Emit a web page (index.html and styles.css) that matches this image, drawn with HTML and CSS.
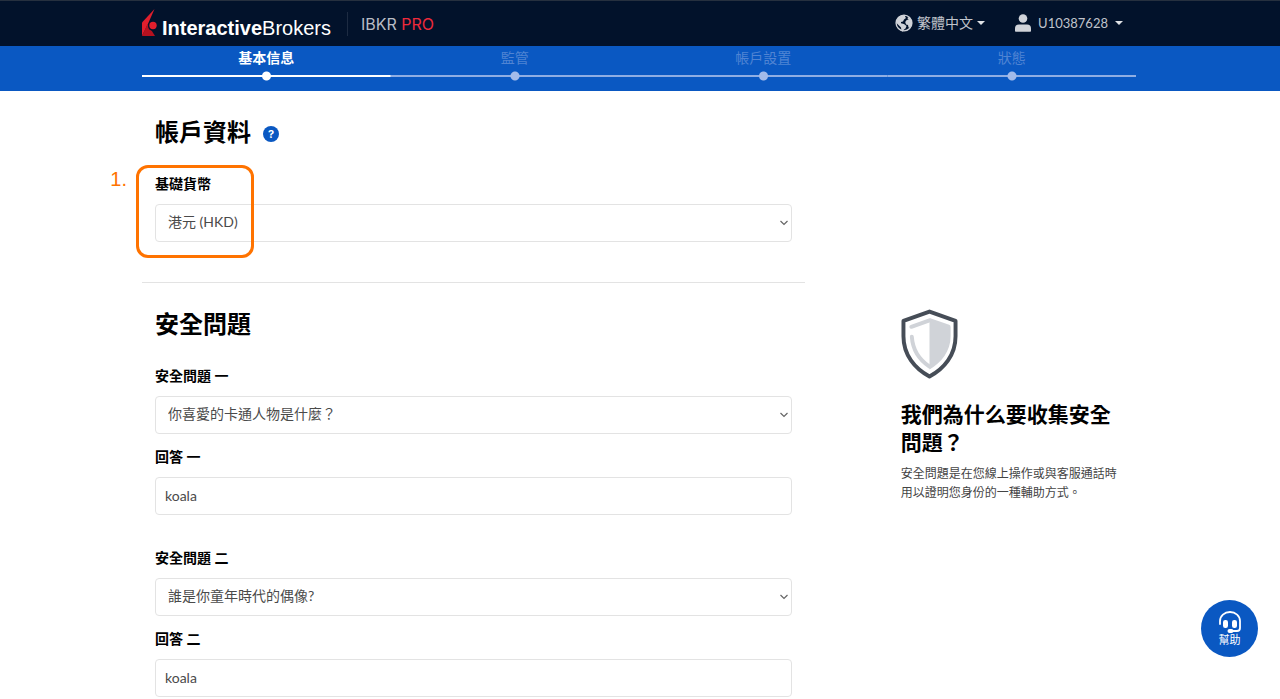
FILE: index.html
```html
<!DOCTYPE html>
<html lang="zh-Hant">
<head>
<meta charset="utf-8">
<meta name="viewport" content="width=device-width, initial-scale=1">
<title>帳戶資料 - InteractiveBrokers</title>
<link rel="stylesheet" href="styles.css">
</head>
<body>
<header class="topbar">
  <div class="container topbar-inner">
    <a class="brand" href="#">
      <svg class="brand-mark" width="16" height="28" viewBox="0 0 16 28" aria-hidden="true">
        <path d="M12.500 0 0 13.500V27l5.500-11z" fill="#e01f2d"/>
        <path d="M0 27 5.500 15 13 27z" fill="#b5111f"/>
        <circle cx="11" cy="17" r="5" fill="#02122b"/>
        <circle cx="11" cy="16.500" r="3.700" fill="#e01f2d"/>
      </svg>
      <span class="brand-name"><b>Interactive</b>Brokers</span>
    </a>
    <span class="product">IBKR <span class="product-tier">PRO</span></span>
    <nav class="menu">
      <button class="menu-button" type="button">
        <svg width="18" height="18" viewBox="0 0 18 18" aria-hidden="true">
          <circle cx="9" cy="9" r="7.900" fill="none" stroke="#d0d3d9" stroke-width="1.400"/>
          <path d="M1.500 7 3.500 3 7 1.300l4-.3-1 1.500 1 1.500-2 1.500-1 2-2 .5v1.300l3 .7 2.500 2-1 2.500-2 1.500-.5 1.700-1.500-.7-.5-3.500-2-2L1.500 9z" fill="#d0d3d9"/>
          <path d="M13 3 15.500 4.500 17 8v2.500l-2 3.500-1.500-.5-.5-2.500-2-.5-.8-2.500 1.500-2 2-.5-1.200-1z" fill="#d0d3d9"/>
        </svg>
        <span class="menu-text">繁體中文</span>
        <span class="caret"></span>
      </button>
      <button class="menu-button account" type="button">
        <svg width="16" height="18" viewBox="0 0 16 18" aria-hidden="true">
          <circle cx="8" cy="4.500" r="4.300" fill="#d0d3d9"/>
          <path d="M0 17v-2.500Q0 10.500 4 10.500h8q4 0 4 4V17q0 .8-.8.8H.8Q0 17.800 0 17z" fill="#d0d3d9"/>
        </svg>
        <span class="menu-text account-id">U10387628</span>
        <span class="caret"></span>
      </button>
    </nav>
  </div>
</header>

<div class="progress">
  <div class="container">
    <ol class="steps">
      <li class="step current" aria-current="step">基本信息</li>
      <li class="step">監管</li>
      <li class="step">帳戶設置</li>
      <li class="step">狀態</li>
    </ol>
  </div>
</div>

<main class="container page">
  <section class="panel account-panel">
    <h1 class="heading">帳戶資料
      <button class="hint" type="button" aria-label="說明">?</button>
    </h1>
    <div class="field">
      <label class="label" for="currency">基礎貨幣</label>
      <div class="select-wrap">
        <select class="control select" id="currency"><option>港元 (HKD)</option></select>
        <svg class="chevron" width="8" height="6" viewBox="0 0 8 6" aria-hidden="true"><path d="M.5 1 4 4.500 7.500 1"/></svg>
      </div>
    </div>
    <div class="callout"><span class="callout-number">1.</span></div>
  </section>

  <section class="panel">
    <h2 class="heading">安全問題</h2>
    <div class="field">
      <label class="label" for="q1">安全問題 一</label>
      <div class="select-wrap">
        <select class="control select" id="q1"><option>你喜愛的卡通人物是什麼？</option></select>
        <svg class="chevron" width="8" height="6" viewBox="0 0 8 6" aria-hidden="true"><path d="M.5 1 4 4.500 7.500 1"/></svg>
      </div>
    </div>
    <div class="field answer">
      <label class="label" for="a1">回答 一</label>
      <input class="control" id="a1" type="text" value="koala">
    </div>
    <div class="field next-question">
      <label class="label" for="q2">安全問題 二</label>
      <div class="select-wrap">
        <select class="control select" id="q2"><option>誰是你童年時代的偶像?</option></select>
        <svg class="chevron" width="8" height="6" viewBox="0 0 8 6" aria-hidden="true"><path d="M.5 1 4 4.500 7.500 1"/></svg>
      </div>
    </div>
    <div class="field answer">
      <label class="label" for="a2">回答 二</label>
      <input class="control" id="a2" type="text" value="koala">
    </div>
  </section>

  <aside class="info">
    <svg class="shield" width="57" height="70" viewBox="0 0 58 70" aria-hidden="true">
      <path d="M29 2 55.500 11.500V27C55.500 46 44 60 29 68 14 60 2.500 46 2.500 27V11.500z" fill="#fff" stroke="#464d57" stroke-width="4" stroke-linejoin="round"/>
      <path d="M29 8.500 49 15.500Q50.500 16 50.500 18v9C50.500 42 41 54 29 61z" fill="#d0d3d8"/>
      <path d="M10.500 17.500 29 11M11 27.500C12 42 20 52 29 58" fill="none" stroke="#d0d3d8" stroke-width="4" stroke-linecap="round"/>
    </svg>
    <h3 class="info-title">我們為什么要收集安全問題？</h3>
    <p class="info-text">安全問題是在您線上操作或與客服通話時用以證明您身份的一種輔助方式。</p>
  </aside>
</main>

<button class="help" type="button">
  <svg width="22" height="22" viewBox="0 0 22 22" aria-hidden="true">
    <path d="M1 13V10A10 9 0 0 1 21 10v7q0 3-3 3h-5" fill="none" stroke="#fff" stroke-width="1.800" stroke-linecap="round"/>
    <rect x="4" y="9" width="5" height="8" rx="2.200" fill="#fff"/>
    <rect x="13" y="9" width="5" height="8" rx="2.200" fill="#fff"/>
    <rect x="8.500" y="18" width="6" height="4" rx="2" fill="#fff"/>
  </svg>
  <span>幫助</span>
</button>
</body>
</html>
```
FILE: styles.css
```css
* {
  box-sizing: border-box;
}

body {
  margin: 0;
  background: #fff;
  color: #000;
  font: 14px/20px Lato, "Noto Sans CJK TC", sans-serif;
}

button,
input,
select {
  margin: 0;
  font: inherit;
}

button {
  padding: 0;
  border: 0;
  background: none;
  cursor: pointer;
}

.container {
  width: 100%;
  max-width: 996px;
  margin: 0 auto;
  padding-right: 2px;
}

.topbar {
  border-top: 1px solid #26303f;
  background: #02122b;
}

.topbar-inner {
  display: flex;
  align-items: center;
  height: 45px;
}

.brand {
  display: flex;
  align-items: center;
  gap: 4px;
  color: #fff;
  text-decoration: none;
}

.brand-mark {
  margin-bottom: 2px;
}

.brand-name {
  padding-top: 8px;
  font: 20px/24px "Liberation Sans", Arial, sans-serif;
}

.product {
  margin-left: 16px;
  padding-left: 13px;
  border-left: 1px solid #1d2b42;
  color: #b9bdc5;
  font: 16px/24px Inter, sans-serif;
}

.product-tier {
  color: #ee2a3b;
}

.menu {
  display: flex;
  gap: 30px;
  margin-left: auto;
  padding-bottom: 2px;
  padding-right: 13px;
}

.menu-button {
  display: flex;
  align-items: center;
  gap: 4px;
  color: #c0c4cb;
}

.account {
  gap: 7px;
}

.account-id {
  font-size: 13px;
}

.caret {
  border: 4px solid transparent;
  border-top-color: #dfe1e5;
  border-bottom: 0;
}

.progress {
  background: #0a58c2;
}

.steps {
  display: grid;
  grid-template-columns: repeat(4, 1fr);
  margin: 0;
  padding: 2px 0 10px;
  list-style: none;
}

.step {
  color: #5084d3;
  text-align: center;
}

.step::after {
  content: "";
  display: block;
  height: 10px;
  margin-top: 3px;
  background:
    radial-gradient(circle, #a3bbea 4px, transparent 5px),
    linear-gradient(#8faee4, #8faee4) center / 100% 2px no-repeat;
}

.current {
  color: #fff;
  font-weight: 700;
}

.current::after {
  background:
    radial-gradient(circle, #fff 4px, transparent 5px),
    linear-gradient(#fff, #fff) center / 100% 2px no-repeat;
}

.page {
  display: grid;
  grid-template-columns: 2fr 1fr;
}

.panel {
  grid-column: 1;
  padding: 25px 13px 0;
}

.account-panel {
  position: relative;
  padding-bottom: 40px;
  border-bottom: 1px solid #e3e3e3;
}

.heading {
  display: flex;
  align-items: center;
  gap: 12px;
  margin: 0 0 26px;
  font-size: 24px;
  line-height: 32px;
}

.hint {
  width: 16px;
  height: 16px;
  margin-top: 4px;
  border-radius: 50%;
  background: #0a58c2;
  color: #fff;
  font: 700 11px/16px Inter, sans-serif;
}

.field {
  display: grid;
  gap: 10px;
}

.label {
  font-weight: 700;
}

.answer {
  margin-top: 13px;
}

.next-question {
  margin-top: 33px;
}

.control {
  width: 100%;
  height: 38px;
  padding: 0 9px 2px;
  border: 1px solid #e3e3e3;
  border-radius: 4px;
  background: #fff;
  color: #4a4a4a;
}

.select {
  grid-area: 1 / 1;
  padding: 0 12px 2px;
  appearance: none;
}

.select-wrap {
  display: grid;
  align-items: center;
}

.chevron {
  grid-area: 1 / 1;
  justify-self: end;
  margin-right: 4px;
  fill: none;
  stroke: #666;
  stroke-width: 1.2;
  pointer-events: none;
}

.callout {
  position: absolute;
  top: 74px;
  left: -6px;
  width: 118px;
  height: 93px;
  border: 3px solid #ff7300;
  border-radius: 12px;
  pointer-events: none;
}

.callout-number {
  position: absolute;
  top: -1px;
  right: 124px;
  color: #ff7300;
  font: 20px/24px "Liberation Sans", Arial, sans-serif;
}

.info {
  grid-column: 2;
  grid-row: 2;
  padding: 26px 13px 0 96px;
}

.shield {
  display: block;
}

.info-title {
  margin: 21px 0 8px;
  font-size: 21px;
  line-height: 28px;
}

.info-text {
  margin: 0;
  color: #444;
  font-size: 12px;
  line-height: 19px;
}

.help {
  position: fixed;
  right: 22px;
  bottom: 42px;
  display: flex;
  flex-direction: column;
  align-items: center;
  justify-content: center;
  width: 57px;
  height: 57px;
  border-radius: 50%;
  background: #0a58c2;
  color: #fff;
  font-size: 11px;
  line-height: 14px;
}
```
